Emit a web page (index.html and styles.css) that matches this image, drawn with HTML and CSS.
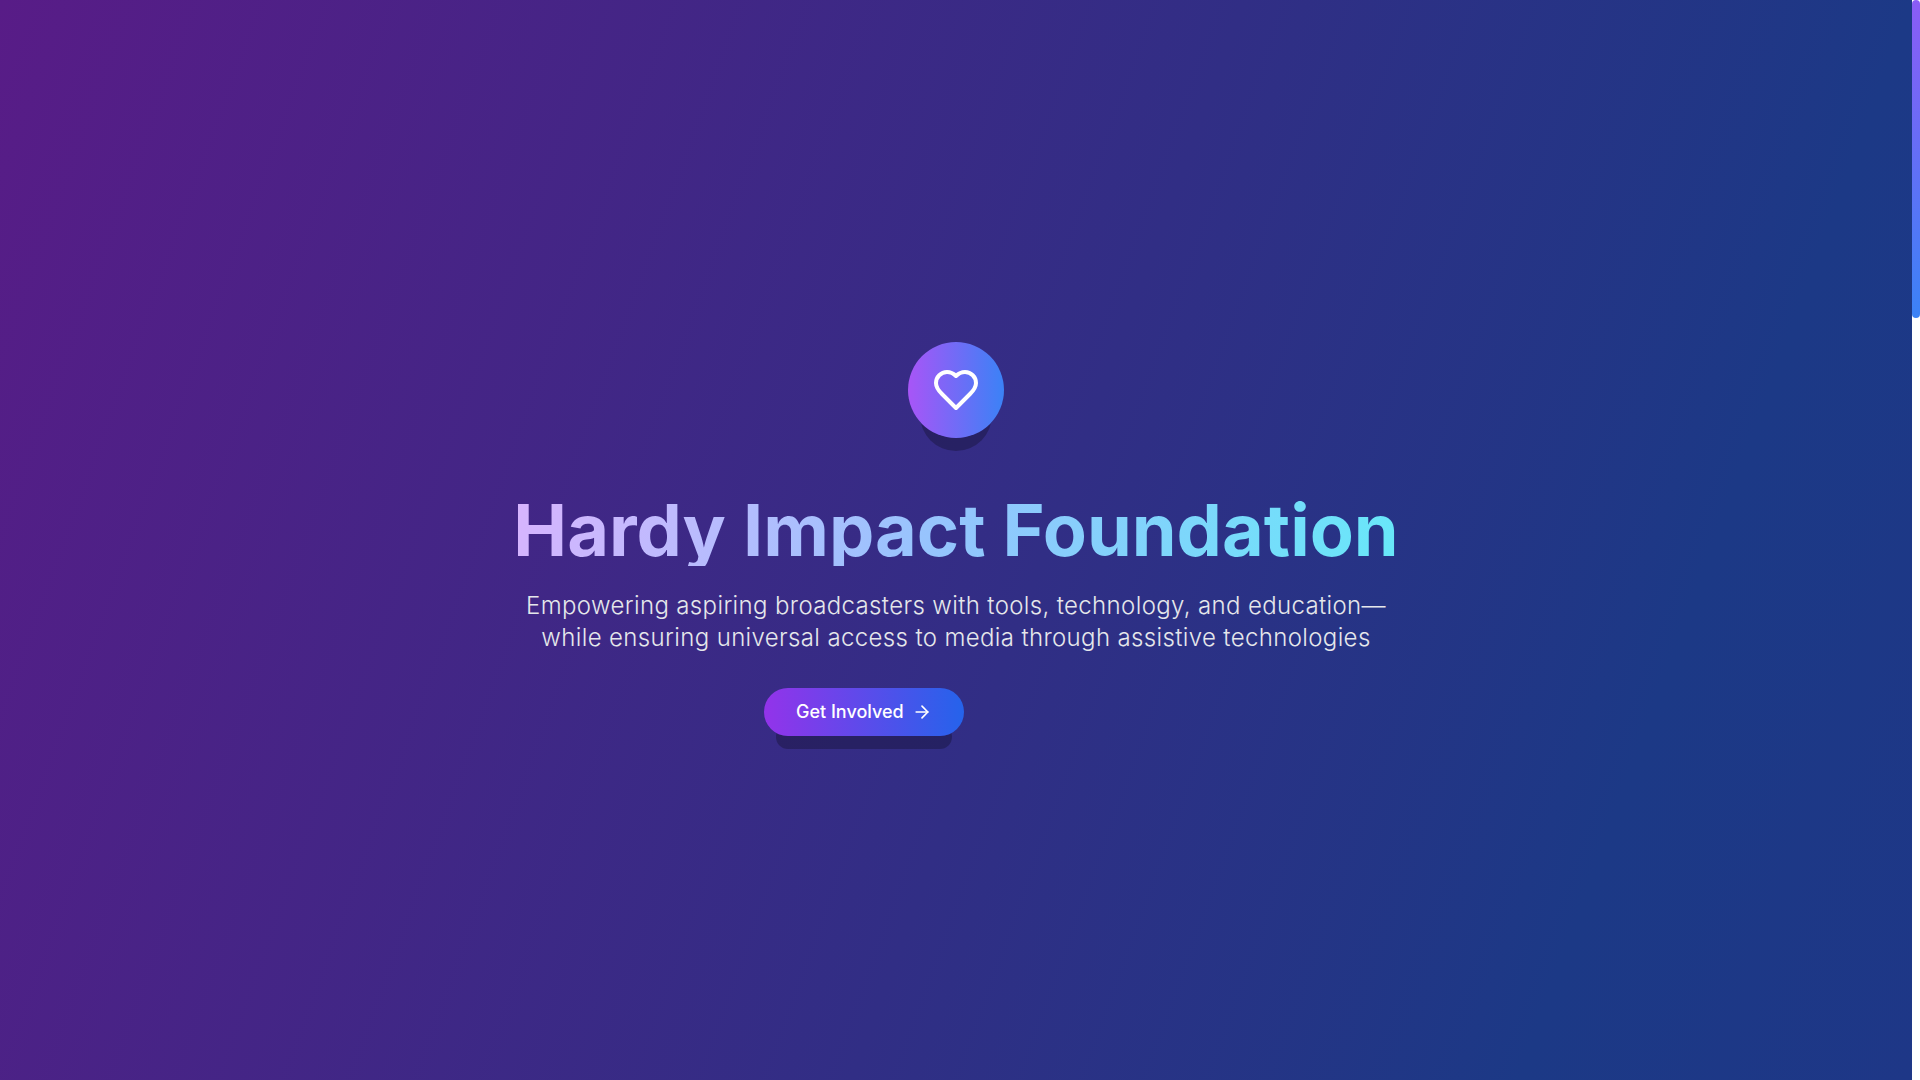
FILE: index.html
```html
<!DOCTYPE html>
<html lang="en">
<head>
  <meta charset="UTF-8">
  <meta name="viewport" content="width=device-width, initial-scale=1.0">
  <title>Hardy Impact Foundation</title>
  <link rel="stylesheet" href="styles.css">
</head>
<body>
  <main class="hero">
    <div class="hero-icon">
      <svg viewBox="0 0 24 24" aria-hidden="true">
        <path d="M19 14c1.49-1.46 3-3.21 3-5.5A5.5 5.5 0 0 0 16.5 3c-1.76 0-3 .5-4.5 2-1.5-1.5-2.74-2-4.5-2A5.5 5.5 0 0 0 2 8.5c0 2.3 1.5 4.05 3 5.5l7 7Z"/>
      </svg>
    </div>
    <h1>Hardy Impact Foundation</h1>
    <p class="tagline">Empowering aspiring broadcasters with tools, technology, and education—while ensuring universal access to media through assistive technologies</p>
    <div class="actions">
      <button type="button" class="btn">
        Get Involved
        <svg viewBox="0 0 24 24" aria-hidden="true">
          <path d="M5 12h14"/>
          <path d="m12 5 7 7-7 7"/>
        </svg>
      </button>
    </div>
  </main>

  <div class="scroll-track">
    <div class="scroll-thumb"></div>
  </div>
</body>
</html>
```
FILE: styles.css
```css
* {
  box-sizing: border-box;
}

body {
  margin: 0;
  min-height: 100vh;
  display: grid;
  grid-template-columns: 1fr 8px;
  font-family: Inter, sans-serif;
  color: #fff;
}

.hero {
  display: flex;
  flex-direction: column;
  align-items: center;
  justify-content: center;
  padding-bottom: 2px;
  text-align: center;
  background: linear-gradient(110deg, #581c87, #312e85 54%, #1c3986 83%, #1e3787);
}

.hero-icon {
  display: flex;
  align-items: center;
  justify-content: center;
  width: 96px;
  height: 96px;
  margin-bottom: 56px;
  border-radius: 50%;
  background: linear-gradient(to right, #a855f7, #3b82f6);
  box-shadow: 0 25px 0 -12px rgba(0, 0, 0, 0.25);
}

svg {
  fill: none;
  stroke: currentColor;
  stroke-width: 2;
  stroke-linecap: round;
  stroke-linejoin: round;
}

.hero-icon svg {
  width: 48px;
  height: 48px;
}

h1 {
  margin: 0 0 24px;
  font-size: 72px;
  font-weight: 700;
  line-height: 72px;
  color: transparent;
  background: linear-gradient(110deg, #d8b4fe, #93c5fd, #67e8f9);
  -webkit-background-clip: text;
  background-clip: text;
}

.tagline {
  max-width: 896px;
  margin: 0 0 34px;
  font-size: 24px;
  font-weight: 300;
  line-height: 32px;
  letter-spacing: 0.015em;
  color: #e5e7eb;
}

.actions {
  display: flex;
  width: 384px;
}

.btn {
  display: flex;
  align-items: center;
  gap: 8px;
  height: 48px;
  padding: 0 32px;
  border: 0;
  border-radius: 9999px;
  font-family: inherit;
  font-size: 18px;
  font-weight: 500;
  line-height: 28px;
  color: #fff;
  background: linear-gradient(to right, #9333ea, #2563eb);
  box-shadow: 0 25px 0 -12px rgba(0, 0, 0, 0.25);
  cursor: pointer;
}

.btn svg {
  width: 20px;
  height: 20px;
}

.scroll-track {
  background: #fff;
}

.scroll-thumb {
  height: 318px;
  border-radius: 4px;
  background: linear-gradient(to bottom, #8b5cf6, #3b82f6);
}
```
